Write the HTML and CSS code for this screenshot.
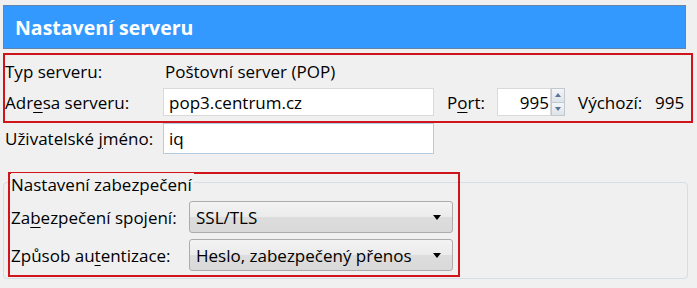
FILE: index.html
```html
<!DOCTYPE html>
<html lang="cs">
<head>
    <meta charset="UTF-8">
    <meta name="viewport" content="width=device-width, initial-scale=1.0">
    <title>Nastavení serveru</title>
    <link rel="stylesheet" href="styles.css">
</head>
<body>
    <div class="header">
        <h1>Nastavení serveru</h1>
    </div>

    <!-- Server address block -->
    <div class="mark server">
        <div class="row first">
            <span class="label">Typ serveru:</span>
            <span class="value">Poštovní server (POP)</span>
        </div>
        <div class="row">
            <label class="label" for="host">Adr<u>e</u>sa serveru:</label>
            <input class="field host" id="host" type="text" value="pop3.centrum.cz">
            <label class="port-label" for="port">P<u>o</u>rt:</label>
            <div class="spin">
                <input class="field port" id="port" type="text" value="995">
                <div class="spin-buttons">
                    <span class="spin-up"></span>
                    <span class="spin-down"></span>
                </div>
            </div>
            <span class="default-label">Výchozí:</span>
            <span class="default-value">995</span>
        </div>
    </div>

    <div class="row user">
        <label class="label" for="user">Uživatelské <u>j</u>méno:</label>
        <input class="field host focused" id="user" type="text" value="iq">
    </div>

    <!-- Security group -->
    <div class="group">
        <div class="mark security">
            <div class="legend"><span>Nastavení zabezpečení</span></div>
            <div class="row">
                <span class="label wide">Za<u>b</u>ezpečení spojení:</span>
                <div class="select">SSL/TLS<span class="arrow"></span></div>
            </div>
            <div class="row">
                <span class="label wide">Způsob au<u>t</u>entizace:</span>
                <div class="select">Heslo, zabezpečený přenos<span class="arrow"></span></div>
            </div>
        </div>
    </div>
</body>
</html>
```

FILE: styles.css
```css
body {
    margin: 0;
    background: #f0f0f0;
    font-family: 'Open Sans', 'Noto Sans', sans-serif;
    font-size: 17px;
    color: #000;
}

u {
    text-decoration-thickness: 1px;
    text-underline-offset: 3px;
}

/* Blue page title */
.header {
    box-sizing: border-box;
    width: 683px;
    height: 44px;
    margin: 5px 0 0 3px;
    padding-left: 11px;
    display: flex;
    align-items: center;
    background: #3399ff;
    border: 1px solid #6584a8;
}

    .header h1 {
        margin: 0;
        font-size: 19.5px;
        font-weight: 700;
        color: #fff;
    }

/* Red annotation frames */
.mark {
    box-sizing: border-box;
    border: 2px solid #d0141c;
}

.server {
    width: 690px;
    height: 70px;
    margin: 4px 0 0 3px;
}

.row {
    display: flex;
    align-items: center;
}

    .row.first {
        height: 33px;
    }

.label {
    width: 158px;
    flex: none;
}

    .label.wide {
        width: 178px;
    }

.value {
    padding-left: 2px;
}

.field {
    box-sizing: border-box;
    height: 28px;
    margin: 0;
    padding: 0 5px;
    font: inherit;
    color: #000;
    background: #fff;
    border: 1px solid #d9d9d9;
    outline: none;
}

.host {
    width: 271px;
}

.focused {
    border-color: #b4cce3;
}

.port-label {
    margin-left: 13px;
    width: 50px;
}

.spin {
    display: flex;
    height: 28px;
}

.port {
    width: 54px;
    text-align: right;
    padding-right: 1px;
}

.spin-buttons {
    display: flex;
    flex-direction: column;
    width: 14px;
}

    .spin-buttons span {
        flex: 1;
        position: relative;
        box-sizing: border-box;
        border: 1px solid #c3c8cf;
        background: linear-gradient(#f4f6f8, #dde3ea);
    }

    .spin-buttons .spin-down {
        border-top: none;
    }

    .spin-buttons span::after {
        content: '';
        position: absolute;
        left: 3px;
        top: 4px;
        border-left: 3px solid transparent;
        border-right: 3px solid transparent;
    }

    .spin-up::after {
        border-bottom: 4px solid #5a7397;
    }

    .spin-down::after {
        border-top: 4px solid #5a7397;
    }

.default-label {
    margin-left: 13px;
    width: 77px;
}

.user {
    height: 31px;
    margin-left: 5px;
}

    .user .field {
        height: 31px;
    }

/* Security group box */
.group {
    box-sizing: border-box;
    width: 685px;
    margin: 28px 0 0 3px;
    padding: 0 0 1px 4px;
    border: 1px solid #d7dde2;
    border-radius: 4px;
}

.security {
    width: 452px;
    margin-top: -11px;
    padding: 0 0 4px 1px;
}

.legend {
    line-height: 22px;
}

    .legend span {
        background: #f0f0f0;
        padding-right: 2px;
    }

.security .row {
    margin-top: 5px;
}

    .security .row + .row {
        margin-top: 6px;
    }

.select {
    box-sizing: border-box;
    width: 264px;
    height: 32px;
    padding-left: 6px;
    display: flex;
    align-items: center;
    position: relative;
    border: 1px solid #acacac;
    border-radius: 3px;
    background: linear-gradient(#f3f3f3, #ebebeb 50%, #dddddd 51%, #d9d9d9);
}

    .select .arrow {
        position: absolute;
        right: 11px;
        top: 13px;
        border-left: 4px solid transparent;
        border-right: 4px solid transparent;
        border-top: 5px solid #000;
    }
```
